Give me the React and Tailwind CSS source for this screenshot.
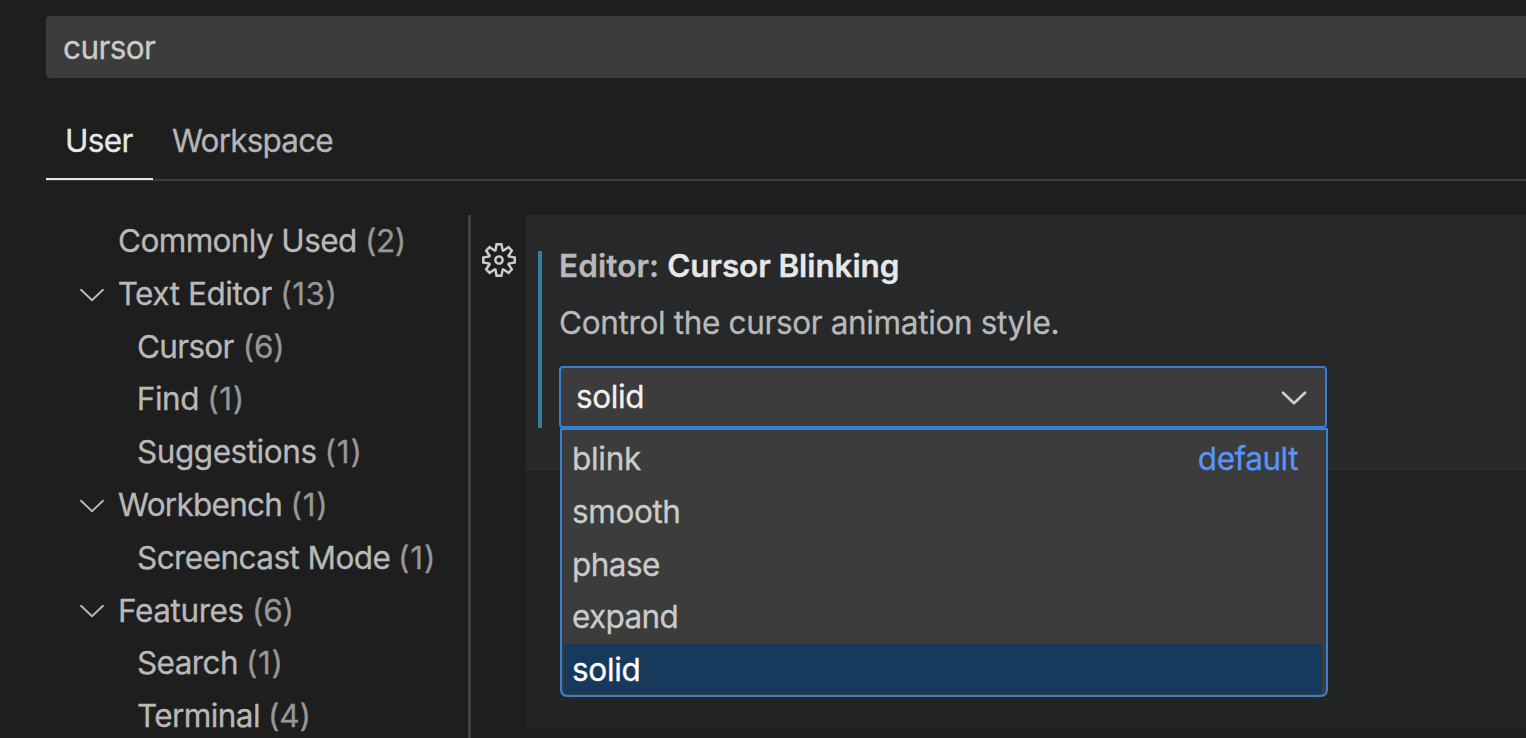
import { VscSettingsGear } from "react-icons/vsc";

const outline = [
  { label: "Commonly Used", count: "(2)", pad: "pl-[72px]", track: "tracking-[-0.62px]", gap: "ml-[8.4px]", ct: "tracking-[-0.5px]" },
  { label: "Text Editor", count: "(13)", pad: "pl-[32.7px]", open: true, track: "tracking-[-0.45px]", gap: "ml-[8.4px]", ct: "tracking-[0.5px]" },
  { label: "Cursor", count: "(6)", pad: "pl-[91px]", track: "tracking-[-0.7px]", gap: "ml-[9px]", ct: "tracking-[-0.2px]" },
  { label: "Find", count: "(1)", pad: "pl-[90.8px]", track: "tracking-[-0.45px]", gap: "ml-[8px]", ct: "tracking-[0.7px]" },
  { label: "Suggestions", count: "(1)", pad: "pl-[91px]", track: "tracking-[-0.45px]", gap: "ml-[8px]", ct: "tracking-[0.8px]" },
  { label: "Workbench", count: "(1)", pad: "pl-[33px]", open: true, track: "tracking-[-0.74px]", gap: "ml-[8.2px]", ct: "tracking-[0.8px]" },
  { label: "Screencast Mode", count: "(1)", pad: "pl-[91px]", track: "tracking-[-0.56px]", gap: "ml-[7.8px]", ct: "tracking-[0.8px]" },
  { label: "Features", count: "(6)", pad: "pl-[33px]", open: true, track: "tracking-[-0.4px]", gap: "ml-[8.2px]", ct: "tracking-[-0.2px]" },
  { label: "Search", count: "(1)", pad: "pl-[91px]", track: "tracking-[-0.6px]", gap: "ml-[8px]", ct: "tracking-[0.6px]" },
  { label: "Terminal", count: "(4)", pad: "pl-[91px]", track: "tracking-[-0.6px]", gap: "ml-[8px]", ct: "tracking-[-0.2px]" },
];

const options = [
  { label: "blink", track: "tracking-[-0.3px]", isDefault: true },
  { label: "smooth", track: "tracking-[-0.4px]" },
  { label: "phase", track: "tracking-[-0.55px]" },
  { label: "expand", track: "tracking-[-0.65px]" },
  { label: "solid", track: "tracking-[-0.3px]", selected: true },
];

function Chevron({ className, strokeWidth }) {
  return (
    <svg viewBox="0 0 26 14" className={className} fill="none" stroke="currentColor" strokeWidth={strokeWidth} strokeLinecap="round" strokeLinejoin="round">
      <path d="M2 1.8 13 12.2 24 1.8" />
    </svg>
  );
}

function Outline() {
  return (
    <nav className="w-[422px] shrink-0 overflow-hidden pt-[0.7px] text-[#b9b9b9]">
      {outline.map((row) => (
        <div key={row.label} className={`flex h-[52.8px] items-center ${row.pad}`}>
          {row.open && <Chevron className="mt-[1.5px] mr-[13px] h-[14px] w-[26px]" strokeWidth={1.9} />}
          <span className={row.track}>{row.label}</span>
          <span className={`${row.gap} ${row.ct} text-[#979797]`}>{row.count}</span>
        </div>
      ))}
    </nav>
  );
}

function Dropdown() {
  return (
    <div className="absolute top-[60px] -right-[3px] left-[-1px] z-10 flex h-[269px] flex-col rounded-b-[7px] border-2 border-[#3a80d2] bg-[#3c3c3c] pt-[2.7px] pr-[4px] pl-[2px]">
      {options.map((o) => (
        <div
          key={o.label}
          className={`flex shrink-0 items-center justify-between pr-[24px] pl-[8px] ${
            o.selected ? "h-[50px] bg-[#17395c] pt-[2px] text-white" : "h-[52.8px] text-[#cbcbcb]"
          }`}
        >
          <span className={o.track}>{o.label}</span>
          {o.isDefault && <span className="tracking-[-0.48px] text-[#5795f8]">default</span>}
        </div>
      ))}
    </div>
  );
}

function Setting() {
  return (
    <section className="h-[257px] border-b border-[#1f2021] bg-[#262829] pt-[36px] pl-[12px]">
      <div className="h-[177px] border-l-4 border-[#3a7c9c] pl-[17px]">
        <h2 className="flex h-[30px] items-center font-semibold text-[#b9b9b9]">
          <span className="tracking-[0.1px]">Editor:</span>
          <span className="ml-[8px] tracking-[-0.1px] text-[#e7e7e7]">Cursor Blinking</span>
        </h2>
        <p className="mt-[26px] flex h-[32px] items-center tracking-[-0.35px] text-[#b9b9b9]">
          Control the cursor animation style.
        </p>
        <div className="relative mt-[27px] flex h-[62px] w-[768px] items-center justify-between rounded-[4px] border-2 border-[#3a80d2] bg-[#3c3c3c] pr-[18px] pl-[15px]">
          <span className="tracking-[-0.35px] text-[#f0f0f0]">solid</span>
          <Chevron className="mt-px h-[14px] w-[26px] text-[#cccccc]" strokeWidth={2.7} />
          <Dropdown />
        </div>
      </div>
    </section>
  );
}

export default function App() {
  return (
    <div className="flex h-[738px] w-[1526px] flex-col overflow-hidden bg-[#1e1e1e] pl-[46px] font-['Inter',sans-serif] text-[31.5px] leading-[38px] font-normal whitespace-nowrap [-webkit-text-stroke:0.3px]">
      <div className="mt-[16px] flex h-[62px] shrink-0 items-center rounded-l-[4px] bg-[#3c3c3c] pt-px pl-[17px] tracking-[-0.6px] text-[#cbcbcb]">
        cursor
      </div>
      <div className="mt-[24px] flex h-[79px] shrink-0 border-b-2 border-[#3d3d3d]">
        <div className="flex h-[78px] w-[107px] items-center border-b-2 border-[#e7e7e7] pt-[2px] pl-[19px] tracking-[-0.65px] text-[#e7e7e7]">
          User
        </div>
        <div className="flex h-[78px] items-center pl-[19px] tracking-[-0.82px] text-[#b5b5b5]">Workspace</div>
      </div>
      <div className="mt-[33px] flex min-h-0 grow">
        <Outline />
        <div className="mt-[1px] w-[3px] shrink-0 bg-[#424242]" />
        <div className="w-[55px] shrink-0 pt-[29px] pl-[11px]">
          <VscSettingsGear className="h-[34px] w-[34px] text-[#cccccc]" />
        </div>
        <div className="mt-[1px] h-[513px] grow bg-[#222524]">
          <Setting />
        </div>
      </div>
    </div>
  );
}
